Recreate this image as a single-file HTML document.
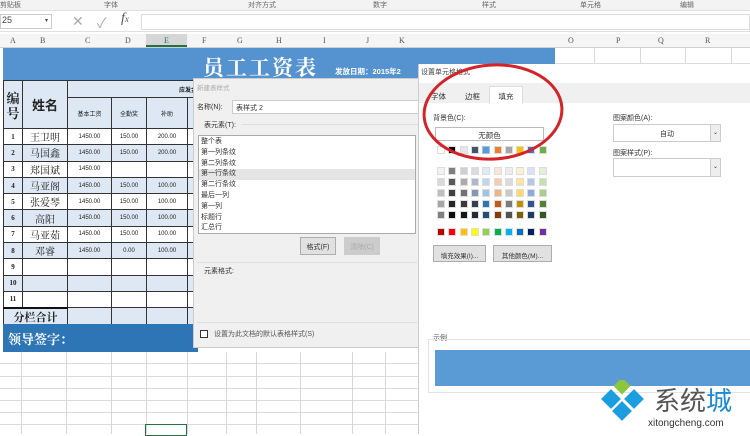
<!DOCTYPE html>
<html><head><meta charset="utf-8"><style>
*{margin:0;padding:0;box-sizing:border-box}
body{width:750px;height:434px;overflow:hidden;background:#fff;position:relative;font-family:"Liberation Sans","Noto Sans CJK SC",sans-serif;font-size:8px;color:#333}
.a{position:absolute}
.vl{position:absolute;width:1px;background:#d8d8d8}
.hl{position:absolute;height:1px;background:#dcdcdc}
table{border-collapse:collapse;table-layout:fixed}
td{border:1px solid #333;text-align:center;font-size:6px;height:16.3px;padding:0;color:#222;overflow:hidden;white-space:nowrap}
tr.b td{background:#dde8f4}
td.n{font-weight:bold;font-size:7px;font-family:"Liberation Serif","Noto Serif CJK SC",serif}
td.nm{font-size:10px;font-family:"Noto Serif CJK SC",serif}
.sw{position:absolute;width:8px;height:8px}
.btn{position:absolute;background:#e1e1e1;border:1px solid #adadad;font-size:7px;text-align:center}
</style></head><body>
<!-- ribbon labels -->
<div class="a" style="left:0;top:0;width:750px;height:11px;background:#f3f3f3;border-bottom:1px solid #e0e0e0;font-size:7px;color:#666">
<span class="a" style="left:0;top:0">剪贴板</span><span class="a" style="left:104px;top:0">字体</span><span class="a" style="left:248px;top:0">对齐方式</span><span class="a" style="left:373px;top:0">数字</span><span class="a" style="left:482px;top:0">样式</span><span class="a" style="left:580px;top:0">单元格</span><span class="a" style="left:680px;top:0">编辑</span></div>
<!-- formula bar -->
<div class="a" style="left:0;top:12px;width:750px;height:20px;background:#fff;border-bottom:1px solid #e0e0e0"></div>
<div class="a" style="left:0;top:14px;width:52px;height:15px;border:1px solid #ccc;font-size:9px;padding-left:1px;color:#444">25<span style="position:absolute;right:3px;top:2px;font-size:6px">▾</span></div>
<div class="a" style="left:72px;top:13px;font-size:14px;color:#aaa">✕</div>
<div class="a" style="left:97px;top:13px;font-size:14px;color:#aaa">✓</div>
<div class="a" style="left:121px;top:11px;font-size:14px;color:#555;font-family:'Liberation Serif',serif;font-style:italic">f<span style="font-size:9px">x</span></div>
<div class="a" style="left:141px;top:14px;width:609px;height:16px;border:1px solid #ddd"></div>
<!-- column headers -->
<div class="a" style="left:0;top:34px;width:750px;height:14px;background:#f5f5f5;border-bottom:1px solid #d0d0d0;font-size:8px;color:#555;font-family:'Liberation Serif',serif">
<span class="a" style="left:10px;top:2px">A</span><span class="a" style="left:40px;top:2px">B</span><span class="a" style="left:85px;top:2px">C</span><span class="a" style="left:125px;top:2px">D</span>
<span class="a" style="left:146px;top:0;width:41px;height:13px;background:#d6d6d6;border-bottom:2px solid #217346;text-align:center;padding-top:2px;color:#217346">E</span>
<span class="a" style="left:202px;top:2px">F</span><span class="a" style="left:237px;top:2px">G</span><span class="a" style="left:276px;top:2px">H</span><span class="a" style="left:323px;top:2px">I</span><span class="a" style="left:366px;top:2px">J</span><span class="a" style="left:399px;top:2px">K</span><span class="a" style="left:568px;top:2px">O</span><span class="a" style="left:616px;top:2px">P</span><span class="a" style="left:658px;top:2px">Q</span><span class="a" style="left:705px;top:2px">R</span></div>
<!-- grid lines -->
<div class="vl" style="left:594px;top:48px;height:16px"></div><div class="vl" style="left:640px;top:48px;height:16px"></div><div class="vl" style="left:685px;top:48px;height:16px"></div><div class="vl" style="left:731px;top:48px;height:16px"></div>
<div class="hl" style="left:555px;top:63px;width:195px"></div>
<div class="a" style="left:0;top:352px;width:418px;height:82px">
<div class="hl" style="left:0;top:11px;width:418px"></div><div class="hl" style="left:0;top:24px;width:418px"></div><div class="hl" style="left:0;top:36px;width:418px"></div><div class="hl" style="left:0;top:48px;width:418px"></div><div class="hl" style="left:0;top:60px;width:418px"></div><div class="hl" style="left:0;top:72px;width:418px"></div>
<div class="vl" style="left:21px;top:0;height:82px"></div><div class="vl" style="left:66px;top:0;height:82px"></div><div class="vl" style="left:111px;top:0;height:82px"></div><div class="vl" style="left:146px;top:0;height:82px"></div><div class="vl" style="left:187px;top:0;height:82px"></div><div class="vl" style="left:226px;top:0;height:82px"></div><div class="vl" style="left:256px;top:0;height:82px"></div><div class="vl" style="left:300px;top:0;height:82px"></div><div class="vl" style="left:352px;top:0;height:82px"></div><div class="vl" style="left:385px;top:0;height:82px"></div>
<div class="a" style="left:145px;top:72px;width:42px;height:12px;border:1px solid #217346"></div></div>
<!-- title band -->
<div class="a" style="left:3px;top:48px;width:552px;height:32px;background:#5593d0"></div>
<div class="a" style="left:203px;top:52px;font-size:21px;color:#fff;letter-spacing:2px;font-family:'Noto Serif CJK SC',serif;font-weight:bold">员工工资表</div>
<div class="a" style="left:335px;top:66px;font-size:7.5px;color:#fff;font-weight:bold">发放日期：2015年2</div>
<!-- table -->
<table class="a" style="left:3px;top:80px;width:200px">
<colgroup><col style="width:19px"><col style="width:45px"><col style="width:44px"><col style="width:35px"><col style="width:41px"><col style="width:16px"></colgroup>
<tr style="background:#dde8f4"><td rowspan="2" style="background:#dde8f4;font-size:13px;font-weight:bold;height:48px;line-height:15px;white-space:normal;font-family:'Noto Serif CJK SC',serif">编<br>号</td><td rowspan="2" style="background:#dde8f4;font-size:13px;font-weight:bold">姓名</td><td colspan="4" style="background:#dde8f4;height:17px;font-weight:bold;text-align:right;padding-right:0">应发金额</td></tr>
<tr><td style="background:#dde8f4;height:31px">基本工资</td><td style="background:#dde8f4">全勤奖</td><td style="background:#dde8f4">补助</td><td style="background:#dde8f4"></td></tr>
<tr><td class="n">1</td><td class="nm">王卫明</td><td>1450.00</td><td>150.00</td><td>200.00</td><td></td></tr>
<tr class="b"><td class="n">2</td><td class="nm">马国鑫</td><td>1450.00</td><td>150.00</td><td>200.00</td><td></td></tr>
<tr><td class="n">3</td><td class="nm">郑国斌</td><td>1450.00</td><td></td><td></td><td></td></tr>
<tr class="b"><td class="n">4</td><td class="nm">马亚阁</td><td>1450.00</td><td>150.00</td><td>100.00</td><td></td></tr>
<tr><td class="n">5</td><td class="nm">张爱琴</td><td>1450.00</td><td>150.00</td><td>100.00</td><td></td></tr>
<tr class="b"><td class="n">6</td><td class="nm">高阳</td><td>1450.00</td><td>150.00</td><td>100.00</td><td></td></tr>
<tr><td class="n">7</td><td class="nm">马亚茹</td><td>1450.00</td><td>150.00</td><td>100.00</td><td></td></tr>
<tr class="b"><td class="n">8</td><td class="nm">邓睿</td><td>1450.00</td><td>0.00</td><td>100.00</td><td></td></tr>
<tr><td class="n">9</td><td></td><td></td><td></td><td></td><td></td></tr>
<tr class="b"><td class="n">10</td><td></td><td></td><td></td><td></td><td></td></tr>
<tr><td class="n">11</td><td></td><td></td><td></td><td></td><td></td></tr>
<tr class="b"><td colspan="2" style="font-size:11px;font-weight:bold;border-top:2px solid #111;height:15px;font-family:'Noto Serif CJK SC',serif">分栏合计</td><td></td><td></td><td></td><td></td></tr>
</table>
<div class="a" style="left:3px;top:324px;width:195px;height:28px;background:#2e75b6;color:#fff;font-size:13px;font-weight:bold;padding:5px 0 0 5px;font-family:'Noto Serif CJK SC',serif">领导签字：</div>
<!-- new table style dialog -->
<div class="a" style="left:193px;top:78px;width:226px;height:270px;background:#f0f0f0;border:1px solid #ccc">
<div class="a" style="left:3px;top:3px;font-size:6.5px;color:#aaa">新建表样式</div>
<div class="a" style="left:3px;top:23px;font-size:7px">名称(N):</div>
<div class="a" style="left:38px;top:21px;width:188px;height:14px;background:#fff;border:1px solid #ccc;font-size:7px;padding:2px 3px">表样式 2</div>
<div class="a" style="left:10px;top:41px;font-size:7px">表元素(T):</div>
<div class="hl" style="left:48px;top:45px;width:176px;background:#ddd"></div>
<div class="a" style="left:4px;top:56px;width:218px;height:99px;background:#fff;border:1px solid #aaa;font-size:7px;line-height:10.8px;padding-top:1px">
<div style="padding-left:2px">整个表</div><div style="padding-left:2px">第一列条纹</div><div style="padding-left:2px">第二列条纹</div><div style="padding-left:2px;background:#e5e5e5">第一行条纹</div><div style="padding-left:2px">第二行条纹</div><div style="padding-left:2px">最后一列</div><div style="padding-left:2px">第一列</div><div style="padding-left:2px">标题行</div><div style="padding-left:2px">汇总行</div></div>
<div class="btn" style="left:106px;top:158px;width:36px;height:18px;padding-top:4px">格式(F)</div>
<div class="btn" style="left:150px;top:158px;width:36px;height:18px;padding-top:4px;background:#ccc;border-color:#ccc;color:#aaa">清除(C)</div>
<div class="hl" style="left:3px;top:183px;width:220px;background:#ddd"></div>
<div class="a" style="left:10px;top:187px;font-size:7px">元素格式:</div>
<div class="hl" style="left:3px;top:243px;width:220px;background:#ddd"></div>
<div class="a" style="left:6px;top:251px;width:8px;height:8px;border:1px solid #333;background:#fff"></div>
<div class="a" style="left:20px;top:250px;font-size:7px;color:#555">设置为此文档的默认表格样式(S)</div>
</div>
<!-- format cells dialog -->
<div class="a" style="left:418px;top:64px;width:332px;height:370px;background:#fff;border-left:1px solid #ccc">
<div class="a" style="left:2px;top:3px;font-size:7px;color:#444">设置单元格格式</div>
<div class="a" style="left:0;top:19px;width:332px;height:20px;background:#f0f0f0"></div>
<div class="a" style="left:12px;top:27px;font-size:7.5px">字体</div>
<div class="a" style="left:46px;top:27px;font-size:7.5px">边框</div>
<div class="a" style="left:70px;top:22px;width:34px;height:18px;background:#fff;border:1px solid #ddd;border-bottom:none;font-size:7.5px;text-align:center;padding-top:4px">填充</div>
<div class="a" style="left:14px;top:49px;font-size:7px">背景色(C):</div>
<div class="a" style="left:16px;top:63px;width:109px;height:14px;border:1px solid #bbb;font-size:7.5px;text-align:center;padding-top:2px">无颜色</div>
<div class="a" style="left:194px;top:49px;font-size:7px">图案颜色(A):</div>
<div class="a" style="left:194px;top:60px;width:108px;height:18px;border:1px solid #ccc;background:#fff;font-size:7px;text-align:center;padding-top:4px">自动<span class="a" style="right:0;top:0;width:10px;height:16px;background:#eee;border-left:1px solid #ccc;font-size:6px;padding-top:4px">⌄</span></div>
<div class="a" style="left:194px;top:84px;font-size:7px">图案样式(P):</div>
<div class="a" style="left:194px;top:94px;width:108px;height:19px;border:1px solid #ccc;background:#fff"><span class="a" style="right:0;top:0;width:10px;height:17px;background:#eee;border-left:1px solid #ccc;font-size:6px;padding-top:4px;text-align:center">⌄</span></div>
<div class="btn" style="left:14px;top:181px;width:53px;height:17px;padding-top:4px;font-size:6.5px">填充效果(I)...</div>
<div class="btn" style="left:74px;top:181px;width:59px;height:17px;padding-top:4px;font-size:6.5px">其他颜色(M)...</div>
<div class="a" style="left:14px;top:269px;font-size:7px;color:#555">示例</div>
<div class="a" style="left:9px;top:275px;width:323px;height:54px;border:1px solid #e3e3e3"></div>
<div class="a" style="left:16px;top:286px;width:316px;height:36px;background:#5b9bd5"></div>
</div>
<div id="sw"></div>
<!-- red ellipse -->
<svg class="a" style="left:0;top:0" width="750" height="434"><ellipse cx="493" cy="112" rx="69" ry="47" fill="none" stroke="#d3242a" stroke-width="3" transform="rotate(-4 493 112)"/></svg>
<!-- watermark -->
<svg class="a" style="left:600px;top:380px" width="60" height="54">
<rect x="16" y="0" width="12" height="12" fill="#8cc63f" transform="rotate(45 22 6)"/>
<rect x="4" y="12" width="14" height="14" fill="#1a9ee0" transform="rotate(45 11 19)"/>
<rect x="27" y="12" width="14" height="14" fill="#1a9ee0" transform="rotate(45 34 19)"/>
<rect x="15" y="24" width="14" height="14" fill="#1a9ee0" transform="rotate(45 22 31)"/>
</svg>
<div class="a" style="left:654px;top:386px;font-size:26px;color:#555;line-height:30px">系统<span style="color:#1a8ad6">城</span></div>
<div class="a" style="left:648px;top:418px;font-size:10px;color:#333">xitongcheng.com</div>
<script>
var c=[["#fff","#000","#e7e6e6","#44546a","#5b9bd5","#ed7d31","#a5a5a5","#ffc000","#4472c4","#70ad47"],
["#f2f2f2","#7f7f7f","#d0cece","#d6dce4","#deebf6","#fbe5d5","#ededed","#fff2cc","#dae3f3","#e2efd9"],
["#d9d9d9","#595959","#aeaaaa","#adb9ca","#bdd7ee","#f7cbac","#dbdbdb","#fee599","#b4c7e7","#c5e0b3"],
["#bfbfbf","#404040","#757171","#8496b0","#9dc3e6","#f4b183","#c9c9c9","#ffd965","#8faadc","#a8d08d"],
["#a6a6a6","#262626","#3a3838","#333f4f","#2e75b5","#c55a11","#7b7b7b","#bf9000","#2f5597","#538135"],
["#808080","#0d0d0d","#171616","#222a35","#1f4e79","#843c0b","#525252","#7f6000","#203864","#375623"],
["#c00000","#ff0000","#ffc000","#ffff00","#92d050","#00b050","#00b0f0","#0070c0","#002060","#7030a0"]];
var ys=[146,167,178,189,200,211,228],h="";
for(var r=0;r<7;r++)for(var i=0;i<10;i++)h+='<div class="sw" style="left:'+(437+i*11.3)+'px;top:'+ys[r]+'px;background:'+c[r][i]+';border:1px solid '+(r==0&&i==4?'#9cc3e6':'#ddd')+'"></div>';
document.getElementById('sw').innerHTML=h;
</script>
</body></html>
